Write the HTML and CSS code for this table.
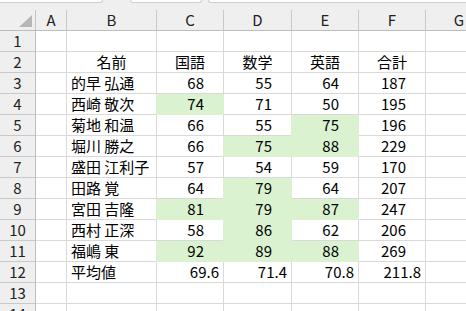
FILE: index.html
```html
<!DOCTYPE html>
<html lang="ja">
<head>
<meta charset="utf-8">
<title>Sheet</title>
<link rel="stylesheet" href="styles.css">
</head>
<body>
<div class="topstrip">
  <div class="tbox tbox1"></div>
  <div class="tbox tbox2"></div>
  <div class="tbox tbox3"></div>
</div>
<div class="sheet">
  <div class="corner"><span class="tri"></span></div>
  <div class="ch">A</div><div class="ch">B</div><div class="ch">C</div><div class="ch">D</div><div class="ch">E</div><div class="ch">F</div><div class="ch">G</div>

  <div class="rh">1</div><div class="c"></div><div class="c"></div><div class="c"></div><div class="c"></div><div class="c"></div><div class="c"></div><div class="c"></div>

  <div class="rh">2</div><div class="c"></div><div class="c ctr">名前</div><div class="c ctr">国語</div><div class="c ctr">数学</div><div class="c ctr">英語</div><div class="c ctr">合計</div><div class="c"></div>

  <div class="rh">3</div><div class="c"></div><div class="c nm">的早 弘通</div><div class="c n">68</div><div class="c n">55</div><div class="c n">64</div><div class="c n">187</div><div class="c"></div>

  <div class="rh">4</div><div class="c"></div><div class="c nm">西崎 敬次</div><div class="c n hi">74</div><div class="c n">71</div><div class="c n">50</div><div class="c n">195</div><div class="c"></div>

  <div class="rh">5</div><div class="c"></div><div class="c nm">菊地 和温</div><div class="c n">66</div><div class="c n">55</div><div class="c n hi">75</div><div class="c n">196</div><div class="c"></div>

  <div class="rh">6</div><div class="c"></div><div class="c nm">堀川 勝之</div><div class="c n">66</div><div class="c n hi">75</div><div class="c n hi">88</div><div class="c n">229</div><div class="c"></div>

  <div class="rh">7</div><div class="c"></div><div class="c nm">盛田 江利子</div><div class="c n">57</div><div class="c n">54</div><div class="c n">59</div><div class="c n">170</div><div class="c"></div>

  <div class="rh">8</div><div class="c"></div><div class="c nm">田路 覚</div><div class="c n">64</div><div class="c n hi">79</div><div class="c n">64</div><div class="c n">207</div><div class="c"></div>

  <div class="rh">9</div><div class="c"></div><div class="c nm">宮田 吉隆</div><div class="c n hi">81</div><div class="c n hi">79</div><div class="c n hi">87</div><div class="c n">247</div><div class="c"></div>

  <div class="rh">10</div><div class="c"></div><div class="c nm">西村 正深</div><div class="c n">58</div><div class="c n hi">86</div><div class="c n">62</div><div class="c n">206</div><div class="c"></div>

  <div class="rh">11</div><div class="c"></div><div class="c nm">福嶋 東</div><div class="c n hi">92</div><div class="c n hi">89</div><div class="c n hi">88</div><div class="c n">269</div><div class="c"></div>

  <div class="rh">12</div><div class="c"></div><div class="c nm">平均値</div><div class="c d">69.6</div><div class="c d">71.4</div><div class="c d">70.8</div><div class="c d">211.8</div><div class="c"></div>

  <div class="rh">13</div><div class="c"></div><div class="c"></div><div class="c"></div><div class="c"></div><div class="c"></div><div class="c"></div><div class="c"></div>

  <div class="rh">14</div><div class="c"></div><div class="c"></div><div class="c"></div><div class="c"></div><div class="c"></div><div class="c"></div><div class="c"></div>
</div>
</body>
</html>
```

FILE: styles.css
```css
* { box-sizing: border-box; }

html, body {
  margin: 0;
  padding: 0;
  width: 466px;
  height: 311px;
  overflow: hidden;
  background: #ffffff;
  font-family: "Noto Sans CJK JP", "Noto Sans", sans-serif;
  font-size: 15px;
  color: #000;
}

.topstrip {
  height: 10px;
  background: #efefef;
  display: flex;
  align-items: flex-start;
}

.tbox {
  height: 3px;
  background: #ffffff;
  border-bottom: 1px solid #cfcfcf;
}

.tbox1 {
  width: 109px;
  margin-left: -6px;
  border-right: 1px solid #cfcfcf;
  border-radius: 0 0 4px 0;
}

.tbox2 {
  width: 72px;
  margin-left: 27px;
  border-left: 1px solid #cfcfcf;
  border-right: 1px solid #cfcfcf;
  border-radius: 0 0 4px 4px;
}

.tbox3 {
  flex: 1;
  margin-left: 6px;
  margin-right: -6px;
  border-left: 1px solid #cfcfcf;
  border-radius: 0 0 0 4px;
}

.sheet {
  display: grid;
  grid-template-columns: 36px 31px 90px 67px 68px 67px 67px 67px;
  grid-auto-rows: 21px;
  width: 493px;
}

.sheet > div {
  line-height: 20px;
  white-space: nowrap;
  overflow: hidden;
}

.corner {
  background: #efefef;
  border-right: 1px solid #c4c4c4;
  border-bottom: 1px solid #bdbdbd;
  display: flex;
  align-items: flex-end;
  justify-content: flex-end;
  padding: 0 3px 3px 0;
}

.tri {
  display: block;
  width: 13px;
  height: 12px;
  background: #b6b6b6;
  clip-path: polygon(100% 0, 100% 100%, 0 100%);
}

.ch {
  background: #efefef;
  border-right: 1px solid #c9c9c9;
  border-bottom: 1px solid #bdbdbd;
  text-align: center;
  color: #222;
}

.rh {
  background: #efefef;
  border-right: 1px solid #bdbdbd;
  border-bottom: 1px solid #c9c9c9;
  text-align: center;
  color: #222;
}

.c {
  border-right: 1px solid #d9d9d9;
  border-bottom: 1px solid #d9d9d9;
}

.ctr { text-align: center; }

.nm { padding-left: 4px; }

.n {
  text-align: right;
  padding-right: 19px;
}

.d {
  text-align: right;
  padding-right: 4px;
}

.hi {
  background: #daf2d0;
  border-right-color: #daf2d0;
  border-bottom-color: #daf2d0;
  box-shadow: -1px 0 0 #daf2d0;
}
```
